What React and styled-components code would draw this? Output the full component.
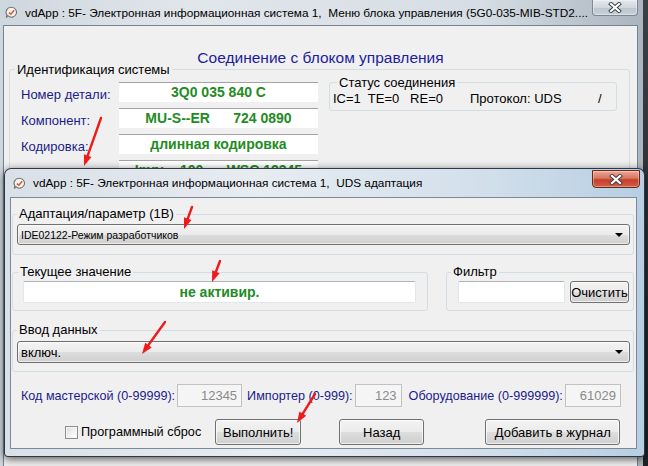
import React from "react";
import styled, { createGlobalStyle } from "styled-components";

const GlobalStyle = createGlobalStyle`
  html, body {
    margin: 0;
    padding: 0;
    background: #25282b;
  }
  body {
    font-family: "Liberation Sans", Arial, sans-serif;
  }
  * {
    box-sizing: border-box;
  }
`;

const Desktop = styled.div`
  position: relative;
  width: 648px;
  height: 466px;
  overflow: hidden;
  background: linear-gradient(180deg, #3b4046 0%, #2a2d31 60%, #1f2124 100%);
`;

/* ---------- window chrome ---------- */

const BackWindow = styled.div`
  position: absolute;
  left: 0;
  top: 0;
  width: 643px;
  height: 490px;
  display: flex;
  flex-direction: column;
  padding: 0 5px 0 3px;
  background: linear-gradient(90deg, #cfd7de 0%, #e1e6eb 30%, #d6dde4 75%, #aab5bf 100%);
`;

const DialogWindow = styled.div`
  position: absolute;
  left: 4px;
  top: 168px;
  width: 641px;
  height: 289px;
  display: flex;
  flex-direction: column;
  padding: 0 7px 7px 5px;
  border: 1px solid rgba(28, 38, 52, 0.9);
  border-radius: 7px 7px 4px 4px;
  background: linear-gradient(90deg, #d9e0e7 0%, #e7ecf1 40%, #d2dfeb 75%, #b7cee3 100%);
  box-shadow: 0 2px 9px rgba(0, 0, 0, 0.65);
`;

const TitleBar = styled.div`
  display: flex;
  align-items: center;
  height: ${(p) => p.$h}px;
  flex: none;
  padding-left: ${(p) => p.$pl}px;
`;

const TitleText = styled.span`
  margin-left: 7px;
  font-size: 11.8px;
  color: #000;
  white-space: nowrap;
`;

const CloseButton = styled.div`
  align-self: flex-start;
  margin-left: auto;
  margin-top: ${(p) => (p.$active ? 1 : 0)}px;
  margin-right: ${(p) => (p.$active ? -3 : 0)}px;
  width: ${(p) => (p.$active ? 48 : 46)}px;
  height: ${(p) => (p.$active ? 18 : 16)}px;
  flex: none;
  display: flex;
  align-items: center;
  justify-content: center;
  border: 1px solid ${(p) => (p.$active ? "#6d2517" : "#7b8793")};
  border-top: ${(p) => (p.$active ? "1px solid #6d2517" : "none")};
  border-radius: 0 0 4px 4px;
  background: ${(p) =>
    p.$active
      ? "linear-gradient(180deg, #eaa898 0%, #d97560 45%, #c4402a 55%, #d35d43 100%)"
      : "linear-gradient(180deg, #e3e8ed 0%, #d0d8df 50%, #bcc6cf 55%, #c9d1d8 100%)"};
  box-shadow: inset 0 0 0 1px rgba(255, 255, 255, 0.35);
`;

const BackClient = styled.div`
  flex: 1;
  background: #f0f0f0;
  border: 1px solid #76828e;
  display: flex;
  flex-direction: column;
`;

const DialogClient = styled.div`
  flex: 1;
  background: #f0f0f0;
  border: 1px solid #7d8995;
  display: flex;
  flex-direction: column;
  padding: 9px 2px 1px 1px;
`;

/* ---------- back window content ---------- */

const Heading = styled.div`
  padding-top: 24px;
  margin-bottom: -3px;
  text-align: center;
  font-size: 15.5px;
  line-height: 16px;
  color: #1d1d9e;
`;

const GroupBox = styled.fieldset`
  margin: ${(p) => p.$m || "0"};
  min-width: 0;
  padding: ${(p) => p.$pad};
  border: 1px solid #d3dde4;
  border-radius: 3px;
  width: ${(p) => (p.$w ? `${p.$w}px` : "auto")};
  flex: none;
`;

const Legend = styled.legend`
  margin-left: ${(p) => p.$shift || 0}px;
  padding: 0 2px;
  font-size: 13px;
  line-height: ${(p) => p.$lh || 14}px;
  color: #000;
`;

const IdentBody = styled.div`
  display: flex;
  align-items: flex-start;
`;

const IdentRows = styled.div`
  display: flex;
  flex-direction: column;
  gap: 6px;
  padding-top: 6px;
`;

const IdentRow = styled.div`
  display: flex;
  align-items: center;
  height: 20px;
`;

const IdentLabel = styled.span`
  width: 98px;
  margin-top: 4px;
  font-size: 13px;
  color: #1b1b88;
`;

const IdentValue = styled.div`
  width: 199px;
  height: 20px;
  background: #fff;
  border-top: 1px solid #a3a3a3;
  text-align: center;
  font-size: 14px;
  line-height: 19px;
  font-weight: bold;
  color: #1f8c1f;
  white-space: pre;
`;

const StatusLine = styled.div`
  display: grid;
  grid-template-columns: 137px 128px auto;
  font-size: 13px;
  line-height: 15px;
  color: #000;
`;

/* ---------- dialog content ---------- */

const Combo = styled.div`
  display: flex;
  align-items: center;
  height: ${(p) => p.$h}px;
  padding: 0 6px 0 3px;
  border: 1px solid #707070;
  border-radius: 3px;
  background: linear-gradient(180deg, #f3f3f3 0%, #ebebeb 50%, #dddddd 52%, #cfcfcf 100%);
  box-shadow: inset 0 0 0 1px rgba(255, 255, 255, 0.6);
  font-size: ${(p) => p.$fs}px;
  color: #000;
`;

const ComboArrow = styled.span`
  margin-left: auto;
  width: 0;
  height: 0;
  border-left: 4px solid transparent;
  border-right: 4px solid transparent;
  border-top: 4px solid #000;
`;

const GroupRow = styled.div`
  display: flex;
  justify-content: space-between;
  margin-top: ${(p) => p.$mt}px;
`;

const TextBox = styled.div`
  height: 22px;
  width: ${(p) => (p.$w ? `${p.$w}px` : "auto")};
  flex: ${(p) => (p.$w ? "none" : "1")};
  background: #fff;
  border: 1px solid #e2e7ec;
  border-top-color: #b0b3ba;
  border-radius: 2px;
  text-align: center;
  font-size: 14px;
  line-height: 20px;
  font-weight: bold;
  color: #1f8c1f;
`;

const FilterBody = styled.div`
  display: flex;
  gap: 5px;
`;

const Button = styled.button`
  width: ${(p) => p.$w}px;
  height: ${(p) => p.$h}px;
  margin-left: ${(p) => p.$ml || 0}px;
  padding: 0;
  flex: none;
  border: 1px solid #707070;
  border-radius: 3px;
  background: linear-gradient(180deg, #f3f3f3 0%, #ebebeb 50%, #dddddd 52%, #cfcfcf 100%);
  box-shadow: inset 0 0 0 1px rgba(255, 255, 255, 0.7);
  font-family: "Liberation Sans", Arial, sans-serif;
  font-size: 13px;
  color: #000;
`;

const CodeRow = styled.div`
  display: flex;
  align-items: center;
  margin-top: 12px;
  padding-left: 9px;
`;

const CodeField = styled.div`
  display: flex;
  align-items: center;
  gap: 2px;
  margin-left: ${(p) => p.$ml || 0}px;
`;

const CodeLabel = styled.span`
  font-size: 12.6px;
  color: #1b1b8a;
  white-space: nowrap;
`;

const CodeInput = styled.div`
  width: ${(p) => p.$w}px;
  height: 23px;
  padding-right: 4px;
  background: #f5f5f5;
  border: 1px solid #c2c2c2;
  text-align: right;
  font-size: 13px;
  line-height: 21px;
  color: #8a8a8a;
`;

const ActionRow = styled.div`
  display: flex;
  align-items: center;
  margin-top: 12px;
  padding-left: 53px;
`;

const CheckBox = styled.span`
  width: 13px;
  height: 13px;
  flex: none;
  border: 1px solid #8e8f8f;
  background: linear-gradient(135deg, #dcdcdc 0%, #f4f4f4 60%, #ffffff 100%);
  box-shadow: inset 0 0 0 1px #f4f4f4;
`;

const CheckLabel = styled.span`
  margin-left: 3px;
  font-size: 12.7px;
  color: #000;
  white-space: nowrap;
`;

const Marks = styled.svg`
  position: absolute;
  left: 0;
  top: 0;
  pointer-events: none;
`;

/* ---------- drawings ---------- */

const AppIcon = () => (
  <svg width="13" height="13" viewBox="0 0 13 13">
    <path
      d="M6.5 1.2a5 5 0 1 1-3.6 8.5L1.3 11.6l0.6-2.7A5 5 0 0 1 6.5 1.2z"
      fill="#f4f4f4"
      stroke="#6f6f6f"
      strokeWidth="1.1"
    />
    <path d="M3.9 6.6l1.9 1.6 3.4-3.9" fill="none" stroke="#e2562a" strokeWidth="1.6" />
  </svg>
);

const CloseGlyph = () => (
  <svg width="14" height="11" viewBox="0 0 14 11">
    <path d="M3 2l8 7M11 2l-8 7" stroke="#3a3f46" strokeWidth="4" strokeLinecap="square" />
    <path d="M3 2l8 7M11 2l-8 7" stroke="#ffffff" strokeWidth="2.2" strokeLinecap="square" />
  </svg>
);

const ARROWS = [
  [101, 118, 84, 166],
  [192, 207, 184, 229],
  [220, 261, 212, 282],
  [165, 322, 142, 354],
  [315, 394, 297, 423],
];

function Arrow({ x1, y1, x2, y2 }) {
  const dx = x2 - x1;
  const dy = y2 - y1;
  const len = Math.hypot(dx, dy);
  const ux = dx / len;
  const uy = dy / len;
  const bx = x2 - ux * 11;
  const by = y2 - uy * 11;
  const pts = [
    [x2, y2],
    [bx - uy * 4, by + ux * 4],
    [bx + uy * 4, by - ux * 4],
  ];
  return (
    <g>
      <line x1={x1} y1={y1} x2={bx} y2={by} stroke="#ee1b1b" strokeWidth="2.4" strokeLinecap="round" />
      <polygon points={pts.map((p) => p.join(",")).join(" ")} fill="#ee1b1b" />
    </g>
  );
}

const identRows = [
  ["Номер детали:", "3Q0 035 840 C"],
  ["Компонент:", "MU-S--ER      724 0890"],
  ["Кодировка:", "длинная кодировка"],
  ["", "Imp:    100      WSC 12345"],
];

export default function App() {
  return (
    <>
      <GlobalStyle />
      <Desktop>
        <BackWindow>
          <TitleBar $h={25} $pl={2}>
            <AppIcon />
            <TitleText>
              vdApp : 5F- Электронная информационная система 1,&nbsp; Меню блока управления (5G0-035-MIB-STD2....
            </TitleText>
            <CloseButton>
              <CloseGlyph />
            </CloseButton>
          </TitleBar>
          <BackClient>
            <Heading>Соединение с блоком управления</Heading>
            <GroupBox $m="0 7px 0 5px" $pad="0 0 10px 11px">
              <Legend $shift={-6} $lh={13}>Идентификация системы</Legend>
              <IdentBody>
                <IdentRows>
                  {identRows.map(([label, value], i) => (
                    <IdentRow key={i}>
                      <IdentLabel>{label}</IdentLabel>
                      <IdentValue>{value}</IdentValue>
                    </IdentRow>
                  ))}
                </IdentRows>
                <GroupBox $m="0 0 0 11px" $w={288} $pad="2px 0 4px 3px">
                  <Legend $shift={4} $lh={13}>Статус соединения</Legend>
                  <StatusLine>
                    <span>IC=1&nbsp; TE=0&nbsp;&nbsp; RE=0</span>
                    <span>Протокол: UDS</span>
                    <span>/</span>
                  </StatusLine>
                </GroupBox>
              </IdentBody>
            </GroupBox>
          </BackClient>
        </BackWindow>

        <DialogWindow>
          <TitleBar $h={28} $pl={3}>
            <AppIcon />
            <TitleText>vdApp : 5F- Электронная информационная система 1,&nbsp; UDS адаптация</TitleText>
            <CloseButton $active>
              <CloseGlyph />
            </CloseButton>
          </TitleBar>
          <DialogClient>
            <GroupBox $pad="3px 3px 9px 4px">
              <Legend>Адаптация/параметр (1B)</Legend>
              <Combo $h={21} $fs={10.5}>
                IDE02122-Режим разработчиков
                <ComboArrow />
              </Combo>
            </GroupBox>

            <GroupRow $mt={10}>
              <GroupBox $w={416} $pad="2px 11px 7px 10px">
                <Legend $shift={-5}>Текущее значение</Legend>
                <TextBox>не активир.</TextBox>
              </GroupBox>
              <GroupBox $w={188} $pad="2px 4px 7px 11px">
                <Legend $shift={-7}>Фильтр</Legend>
                <FilterBody>
                  <TextBox $w={107} />
                  <Button $w={59} $h={22}>Очистить</Button>
                </FilterBody>
              </GroupBox>
            </GroupRow>

            <GroupBox $m="12px 0 0 0" $pad="4px 3px 8px 4px">
              <Legend>Ввод данных</Legend>
              <Combo $h={22} $fs={13}>
                включ.
                <ComboArrow />
              </Combo>
            </GroupBox>

            <CodeRow>
              <CodeField>
                <CodeLabel>Код мастерской (0-99999):</CodeLabel>
                <CodeInput $w={65}>12345</CodeInput>
              </CodeField>
              <CodeField $ml={5}>
                <CodeLabel>Импортер (0-999):</CodeLabel>
                <CodeInput $w={47}>123</CodeInput>
              </CodeField>
              <CodeField $ml={7}>
                <CodeLabel>Оборудование (0-999999):</CodeLabel>
                <CodeInput $w={56}>61029</CodeInput>
              </CodeField>
            </CodeRow>

            <ActionRow>
              <CheckBox />
              <CheckLabel>Программный сброс</CheckLabel>
              <Button $w={86} $h={26} $ml={14}>Выполнить!</Button>
              <Button $w={85} $h={26} $ml={38}>Назад</Button>
              <Button $w={135} $h={26} $ml={61}>Добавить в журнал</Button>
            </ActionRow>
          </DialogClient>
        </DialogWindow>

        <Marks width="648" height="466" viewBox="0 0 648 466">
          {ARROWS.map(([x1, y1, x2, y2], i) => (
            <Arrow key={i} x1={x1} y1={y1} x2={x2} y2={y2} />
          ))}
        </Marks>
      </Desktop>
    </>
  );
}
